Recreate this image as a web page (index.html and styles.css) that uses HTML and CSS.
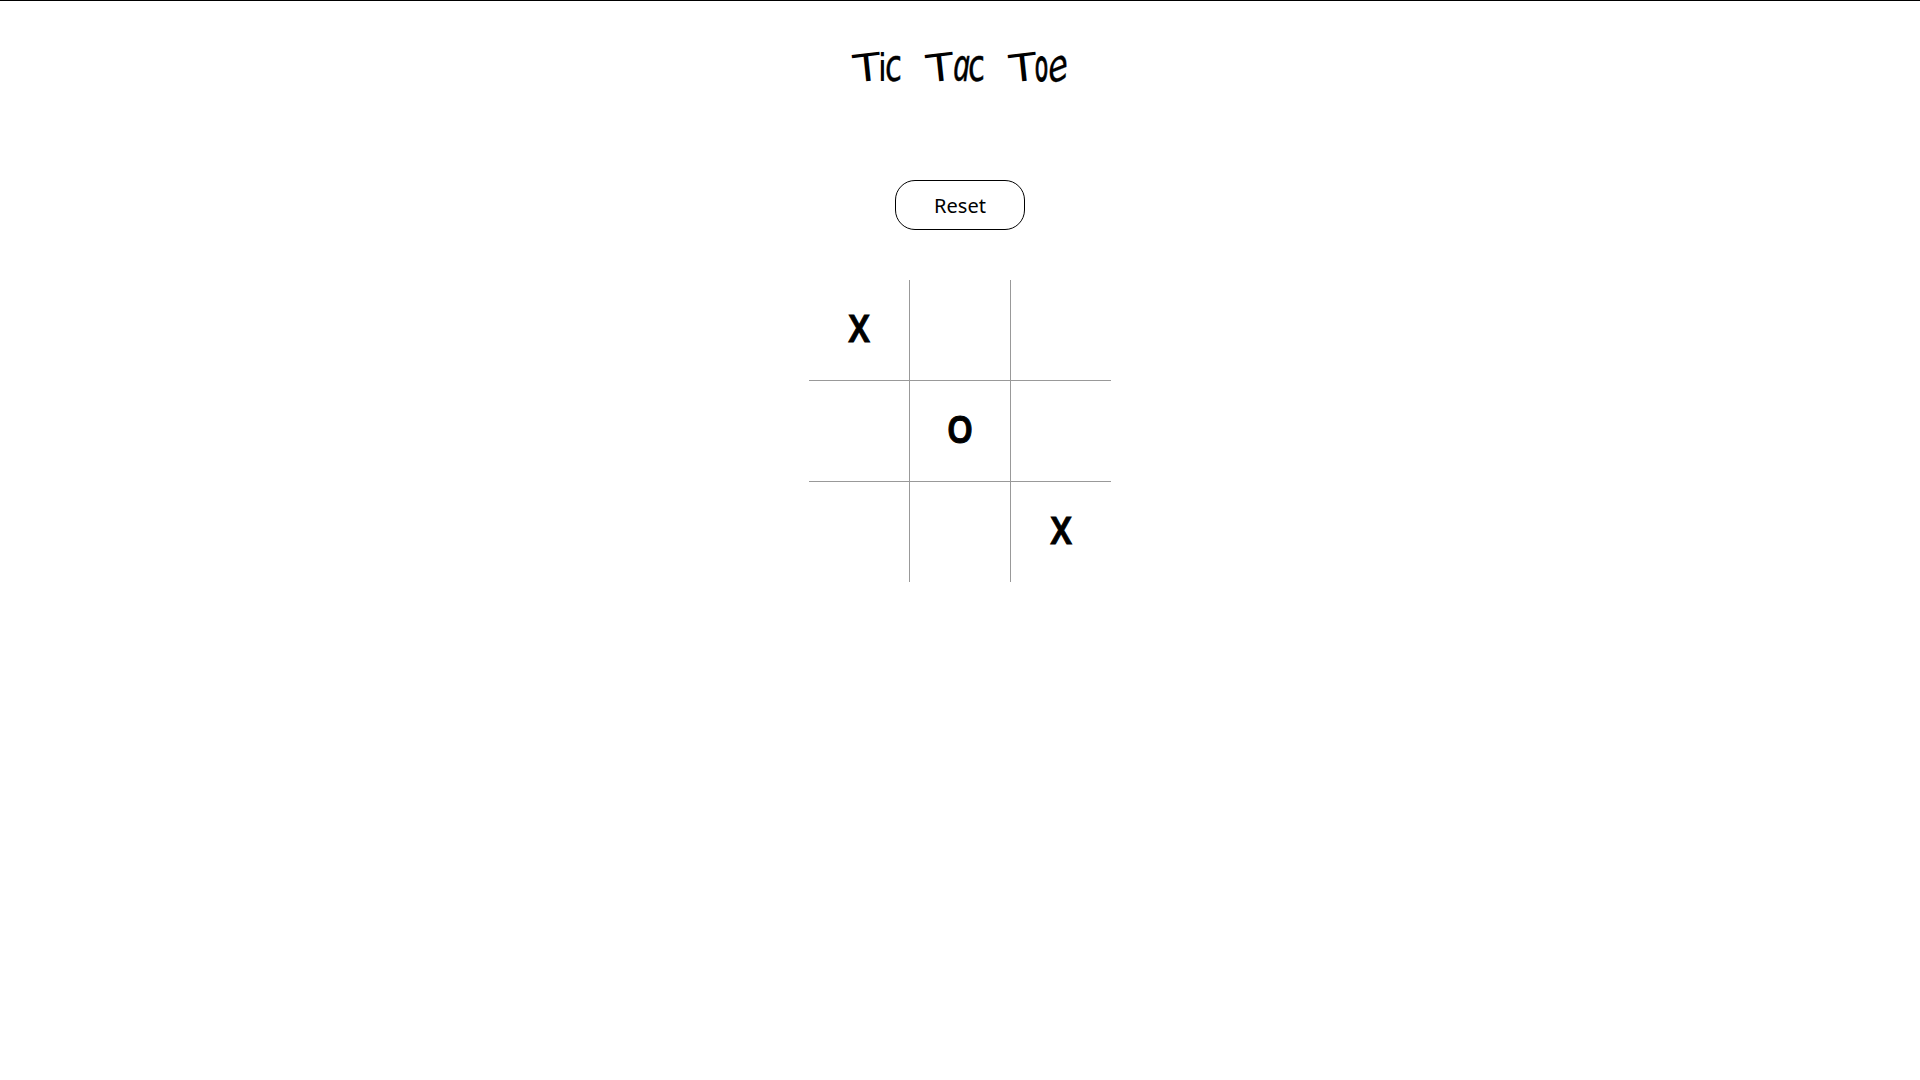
FILE: index.html
```
<!DOCTYPE html>
<html lang="en">
<head>
<meta charset="utf-8">
<title>Tic Tac Toe</title>
<link rel="stylesheet" href="styles.css">
</head>
<body>
<h1 class="title">
<span class="word"><span class="cap">T</span><span class="i">i</span><span class="c">c</span></span>
<span class="word"><span class="cap">T</span><span class="a">a</span><span class="c">c</span></span>
<span class="word"><span class="cap">T</span><span class="o">o</span><span class="e">e</span></span>
</h1>
<button class="reset">Reset</button>
<main class="board">
<div class="cell"><span class="mark">X</span></div><div class="cell"></div><div class="cell"></div>
<div class="cell"></div><div class="cell"><span class="mark mark-o">O</span></div><div class="cell"></div>
<div class="cell"></div><div class="cell"></div><div class="cell"><span class="mark">X</span></div>
</main>
</body>
</html>
```
FILE: styles.css
```
* { box-sizing: border-box; }
body {
  margin: 0;
  min-height: 100vh;
  border-top: 1px solid #000;
  background: #fff;
  color: #000;
  display: flex;
  flex-direction: column;
  align-items: center;
  font-family: "Noto Sans", sans-serif;
}
.title {
  display: flex;
  align-items: baseline;
  gap: 23px;
  height: 60px;
  margin: 33px 0 86px;
  font: 400 44px/60px "DejaVu Sans", sans-serif;
}
.word { display: flex; align-items: baseline; }
.word span { display: flex; justify-content: center; }
.word .cap { width: 28px; font-size: 38px; transform: skew(6deg, -7deg) scaleX(1.18); }
.word .i { width: 5px; font-size: 37px; transform: translateX(-1px) scaleX(.9); }
.word .c { width: 17px; transform: translateX(-1px) scaleX(.7) skewY(-6deg); -webkit-text-stroke: .5px #000; }
.word .a { width: 15px; font: italic 400 45px/60px "Noto Sans", sans-serif; transform: scaleX(.66); -webkit-text-stroke: .5px #000; }
.word .o { width: 11px; transform: translateX(-1px) scaleX(.5); -webkit-text-stroke: 1.2px #000; }
.word .e { width: 20px; transform: scaleX(.74) skewY(-16deg); -webkit-text-stroke: .3px #000; }
.reset {
  width: 130px;
  height: 50px;
  padding: 2px 0 0;
  border: 1px solid #000;
  border-radius: 20px;
  background: #fff;
  color: #000;
  font: 400 20px/28px "Noto Sans", sans-serif;
}
.board {
  display: grid;
  grid-template-columns: repeat(3, 100px);
  grid-auto-rows: 100px;
  gap: 1px;
  margin-top: 50px;
  background: #999;
}
.cell {
  display: flex;
  align-items: center;
  justify-content: center;
  padding-bottom: 7px;
  background: #fff;
}
.mark {
  font: 600 38px/50px "Noto Sans", sans-serif;
  -webkit-text-stroke: 1px #000;
  transform: scaleX(.88);
}
.mark-o { transform: scaleX(.87); }
```
